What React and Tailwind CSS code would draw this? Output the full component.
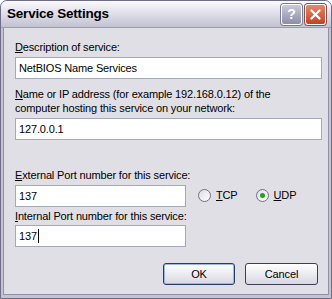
import React from 'react';

const font = { fontFamily: '"Liberation Sans", Arial, sans-serif' };

function Field({ value, caret = false, className = '' }) {
    return (
        <div className={`h-[22px] bg-white border border-[#a4a8b8] flex items-center px-[3px] text-[11px] tracking-[-0.15px] text-black ${className}`}>
            <span>{value}</span>
            {caret && <span className="w-px h-[14px] bg-black ml-px" />}
        </div>
    );
}

function Radio({ label, checked }) {
    return (
        <div className="flex items-center gap-[5px] text-[11px] text-black">
            <span className="w-[13px] h-[13px] rounded-full border border-[#6f6f86] bg-gradient-to-br from-[#dcdce6] to-white flex items-center justify-center">
                {checked && <span className="w-[5px] h-[5px] rounded-full bg-[#21a21d]" />}
            </span>
            <span><span className="underline">{label[0]}</span>{label.slice(1)}</span>
        </div>
    );
}

function Button({ children, isDefault }) {
    return (
        <div className={`h-[22px] rounded-[3px] border flex items-center justify-center text-[11px] text-black bg-gradient-to-b from-white to-[#d8d7e2] ${isDefault ? 'w-[72px] border-[#253c6a] shadow-[inset_0_0_0_1px_#9fb5e3]' : 'w-[73px] border-[#3d3d55]'}`}>
            {children}
        </div>
    );
}

export default function App() {
    return (
        <div className="w-[332px] h-[299px] bg-white">
            <div className="w-[332px] h-[299px] flex flex-col border border-[#6e6d85] rounded-t-[7px] bg-[#c3c3d2] overflow-hidden" style={font}>
                {/* title bar */}
                <div className="h-[27px] flex items-center justify-between pl-[6px] pr-[5px] bg-gradient-to-b from-[#fbfbfd] via-[#dedde8] to-[#c2c2d2] border-b border-[#9c9cb0]">
                    <span className="text-[13.5px] font-bold text-black tracking-[-0.2px]">Service Settings</span>
                    <div className="flex gap-[3px]">
                        <div className="w-[21px] h-[21px] rounded-[3px] border border-white bg-gradient-to-b from-[#c9cadb] to-[#8d8ea8] flex items-center justify-center text-white font-bold text-[14px] shadow-[0_0_0_1px_#7b7b95]">?</div>
                        <div className="w-[21px] h-[21px] rounded-[3px] border border-white bg-gradient-to-b from-[#e9866a] to-[#c5401f] flex items-center justify-center shadow-[0_0_0_1px_#8a5050]">
                            <svg width="11" height="11" viewBox="0 0 11 11">
                                <path d="M1.5 1.5 L9.5 9.5 M9.5 1.5 L1.5 9.5" stroke="white" strokeWidth="2.2" strokeLinecap="round" />
                            </svg>
                        </div>
                    </div>
                </div>
                {/* body */}
                <div className="flex-1 flex mx-[2px] mb-[3px]">
                    <div className="flex-1 bg-[#e0dfe6] border-l border-r border-b border-[#8f8fa5] pl-[11px] pr-[6px] pt-[12px] flex flex-col text-[11px] tracking-[-0.15px] text-black">
                        <div className="leading-[14px]"><span className="underline">D</span>escription of service:</div>
                        <Field value="NetBIOS Name Services" className="mt-[3px] w-[307px]" />
                        <div className="mt-[8px] leading-[14px]">
                            <span className="underline">N</span>ame or IP address (for example 192.168.0.12) of the<br />
                            computer hosting this service on your network:
                        </div>
                        <Field value="127.0.0.1" className="mt-[3px] w-[307px] h-[20px]" />
                        <div className="flex mt-[28px]">
                            <div className="flex flex-col w-[171px]">
                                <div className="leading-[14px] whitespace-nowrap"><span className="underline">E</span>xternal Port number for this service:</div>
                                <Field value="137" className="mt-[3px] w-[171px]" />
                                <div className="mt-[2px] leading-[14px] whitespace-nowrap"><span className="underline">I</span>nternal Port number for this service:</div>
                                <Field value="137" caret className="mt-[2px] w-[171px] h-[21px]" />
                            </div>
                            <div className="flex items-start gap-[18px] pt-[19px] pl-[12px]">
                                <Radio label="TCP" />
                                <Radio label="UDP" checked />
                            </div>
                        </div>
                        <div className="flex justify-end gap-[10px] mt-[16px] pr-[4px]">
                            <Button isDefault>OK</Button>
                            <Button>Cancel</Button>
                        </div>
                    </div>
                </div>
            </div>
        </div>
    );
}
